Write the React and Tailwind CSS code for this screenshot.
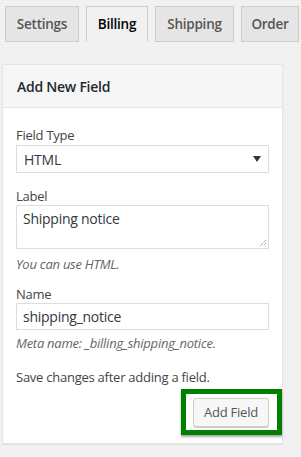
import React from 'react'

const tabs = [
  { name: 'Settings', w: 'w-[74px]' },
  { name: 'Billing', w: 'w-[62px]' },
  { name: 'Shipping', w: 'w-[79px]' },
  { name: 'Order', w: 'w-[58px]' },
]

const App = () => {
  return (
    <div className="min-h-[457px] bg-[#f1f1f1] font-['Open_Sans',sans-serif] text-[13px] tracking-[-0.25px] text-[#444]">
      {/* tabs */}
      <div className="flex gap-[7px] pl-[5px] pt-[6px] whitespace-nowrap">
        {tabs.map(tab => (
          <div
            key={tab.name}
            className={`${tab.w} h-[36px] border border-[#ccc] text-center text-[13.5px] font-semibold leading-[34px] ${
              tab.name === 'Billing'
                ? 'bg-[#f1f1f1] border-b-[#f1f1f1] text-black'
                : 'bg-[#e5e5e5] text-[#555]'
            }`}
          >
            {tab.name}
          </div>
        ))}
      </div>

      {/* panel */}
      <div className="ml-[2px] mt-[22px] w-[281px] bg-white border border-[#e5e5e5] shadow-[0_1px_1px_rgba(0,0,0,0.06)]">
        <div className="h-[43px] bg-[#f6f6f6] border-b border-[#e5e5e5] px-[14px] flex items-center">
          <h2 className="text-[14px] font-semibold text-[#23282d]">Add New Field</h2>
        </div>

        <div className="px-[13px] pt-[18px] pb-[16px]">
          <label className="block leading-[18px]">Field Type</label>
          <div className="mt-[1px] h-[28px] border border-[#ddd] bg-white flex items-center justify-between pl-[7px] pr-[7px] text-[14px] text-[#32373c]">
            <span>HTML</span>
            <svg width="8" height="6" viewBox="0 0 8 6">
              <path d="M0 0h8L4 6z" fill="#32373c" />
            </svg>
          </div>

          <label className="block leading-[18px] mt-[14px]">Label</label>
          <div className="relative h-[44px] border border-[#ddd] bg-white px-[6px] pt-[2px] text-[14px] text-[#32373c]">
            Shipping notice
            <svg className="absolute right-[1px] bottom-[1px]" width="9" height="9" viewBox="0 0 9 9">
              <path d="M8 2L2 8M8 5L5 8" stroke="#777" strokeWidth="1" strokeDasharray="1 1" />
            </svg>
          </div>
          <p className="mt-[6px] leading-[18px] italic text-[#666]">You can use HTML.</p>

          <label className="block leading-[18px] mt-[12px]">Name</label>
          <div className="h-[27px] border border-[#ddd] bg-white px-[6px] flex items-center text-[14px] text-[#32373c]">
            shipping_notice
          </div>
          <p className="mt-[4px] leading-[18px] italic text-[#666]">Meta name: _billing_shipping_notice.</p>

          <p className="mt-[16px] leading-[18px]">Save changes after adding a field.</p>

          <div className="mt-[12px] flex justify-end">
            <div className="relative">
              <div className="absolute left-[-12px] right-[-13px] top-[-9px] bottom-[-8px] border-[5px] border-[#008000] shadow-[0_2px_2px_rgba(0,0,0,0.35)]" />
              <button className="relative h-[29px] w-[76px] rounded-[3px] border border-[#ccc] bg-[#f7f7f7] text-[13px] text-[#555] shadow-[0_1px_0_#ccc]">
                Add Field
              </button>
            </div>
          </div>
        </div>
      </div>
    </div>
  )
}

export default App
